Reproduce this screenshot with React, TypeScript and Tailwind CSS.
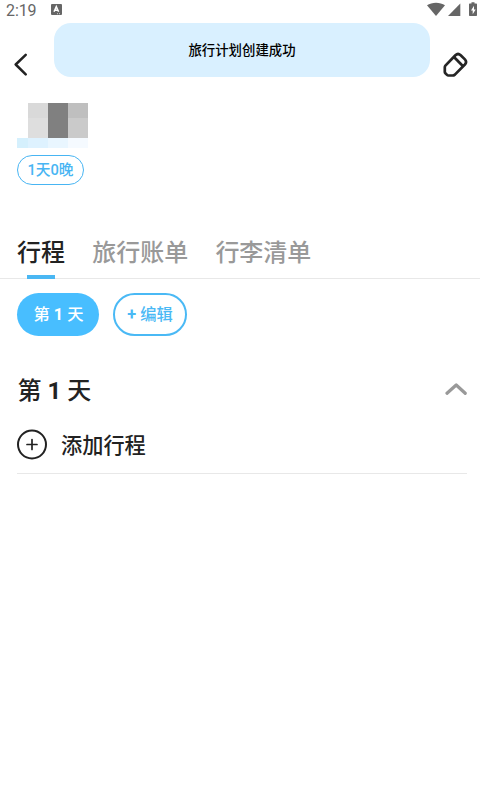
import React, { useState } from 'react';
import clsx from 'clsx';

const tabs = ['行程', '旅行账单', '行李清单'];

const StatusBar: React.FC = () => (
  <div className="flex h-5 items-center justify-between pl-1.5 pr-[3px] text-[#666]">
    <div className="flex items-center gap-[15px]">
      <span className="pt-px text-[16px] leading-5 tracking-[-0.1px]">2:19</span>
      <svg className="mb-px h-[11px] w-[11px]" viewBox="0 0 11 11">
        <rect width="11" height="11" rx="1" fill="#666" />
        <path d="M3 7.8 5.3 2.6 7.6 7.8M4 6.2h2.8" fill="none" stroke="#fff" strokeWidth="1.5" />
        <path d="M6 9.7h1M8 9.7h1" stroke="#fff" strokeWidth="0.7" />
      </svg>
    </div>
    <svg className="h-5 w-[50px]" viewBox="0 0 50 20" fill="#666">
      <path d="M0 5.2C4.8 1.8 13.2 1.8 18 5.2L9 16Z" />
      <path d="M33.3 3.6V16H21Z" />
      <path d="M44.5 2.2h3v1.3h1.8q.7 0 .7.7v11.1q0 .7-.7.7h-6.6q-.7 0-.7-.7V4.2q0-.7.7-.7h1.8Z" />
      <path d="M47 5.8 44 10.4h1.7v3.8l3-4.8H47Z" fill="#fff" />
    </svg>
  </div>
);

const Header: React.FC = () => (
  <header className="flex h-[57px] items-start pt-[3px]">
    <button className="mt-[29px] ml-[13px] h-6 w-4" aria-label="返回">
      <svg className="h-6 w-4" viewBox="0 0 16 24" fill="none" stroke="#222" strokeWidth="2.5" strokeLinecap="round" strokeLinejoin="round">
        <path d="M12.7 2.8 2.7 12.5 12.7 22.3" />
      </svg>
    </button>
    <div className="ml-[25px] flex h-[54px] w-[376px] items-center justify-center rounded-[17px] bg-[#d9f0ff] pt-0.5 text-[13.4px] font-medium text-black">
      旅行计划创建成功
    </div>
    <button className="mt-[28px] ml-[12px] h-7 w-7" aria-label="编辑">
      <svg className="h-7 w-7" viewBox="0 0 28 28" fill="none" stroke="#252525" strokeWidth="2.7" strokeLinejoin="round">
        <path d="M3.4 14.6 13.4 4.2Q16 1.8 18.7 4.2L22.9 8.4Q25.2 10.9 22.9 13.5L12.9 23.6Q11.8 24.5 10.4 24.5H6.4Q5.6 24.5 5 23.9L3.4 22.3Q2.8 21.7 2.8 20.9V16.2Q2.8 15.3 3.4 14.6Z" />
        <path d="M12.2 6.2 20.8 15" />
      </svg>
    </button>
  </header>
);

const CoverMosaic: React.FC = () => (
  <div className="mt-[26px] ml-[17px] grid w-[71px] grid-cols-[11px_20px_20px_20px] grid-rows-[15px_20px_10px]">
    <span />
    <span className="bg-[#d9d9d9]" />
    <span className="row-span-2 bg-[#808080]" />
    <span className="bg-[#bfbfbf]" />
    <span />
    <span className="bg-[#dedede]" />
    <span className="bg-[#cacaca]" />
    <span className="bg-[#d5f0fd]" />
    <span className="bg-[#def2ff]" />
    <span className="bg-[#e9f6ff]" />
    <span className="bg-[#f5faff]" />
  </div>
);

const App: React.FC = () => {
  const [active, setActive] = useState(0);
  const [open, setOpen] = useState(true);

  return (
    <div className="flex h-[812px] w-[480px] flex-col bg-white font-[Roboto,'Noto_Sans_CJK_SC',sans-serif] text-[#222]">
      <StatusBar />
      <Header />
      <CoverMosaic />
      <div className="mt-[7px] ml-[17px] flex h-[30px] w-[67px] items-center justify-center rounded-full border border-[#48b5f3] pt-px text-[14.7px] font-medium text-[#48b5f3]">
        1天0晚
      </div>

      <nav className="mt-[49px] flex h-[45px] gap-[27.2px] border-b border-[#e8e8e8] pl-[17px]">
        {tabs.map((tab, i) => (
          <button
            key={tab}
            onClick={() => setActive(i)}
            className={clsx(
              'flex h-[45px] flex-col items-center justify-between pt-px text-[24px] leading-[36px] font-medium',
              i === active ? 'text-[#222]' : 'text-[#999]',
            )}
          >
            {tab}
            {i === active && <span className="h-1 w-7 bg-[#4ab7f3]" />}
          </button>
        ))}
      </nav>

      <div className="mt-[14px] flex gap-[14px] pl-[17px] font-medium">
        <button className="h-[43px] w-[82px] rounded-full bg-[#48beff] pt-0.5 pl-px text-[16.3px] text-white">
          第 <span className="font-bold">1</span> 天
        </button>
        <button className="h-[43px] w-[74px] rounded-full border-2 border-[#4ab9f5] pt-0.5 text-[16.3px] text-[#4ab9f5]">
          <span className="font-bold">+</span> 编辑
        </button>
      </div>

      <section className="mx-[13px] mt-[36px] pl-1">
        <button onClick={() => setOpen(!open)} className="flex h-9 w-full items-center justify-between text-[24px] font-medium">
          <span className="pt-0.5 pl-[0.5px]">
            第 <span className="font-bold">1</span> 天
          </span>
          <svg className={clsx('mb-0.5 h-4 w-[22px]', !open && 'rotate-180')} viewBox="0 0 22 16" fill="none" stroke="#999" strokeWidth="3.2" strokeLinecap="round" strokeLinejoin="round">
            <path d="M2 12.3 11.2 4 20.2 12.3" />
          </svg>
        </button>
        {open && (
          <button className="flex h-[66px] w-full items-center gap-[14px] border-b border-[#e8e8e8] pt-2 text-[21.2px] font-medium">
            <svg className="h-[30px] w-[30px] overflow-visible" viewBox="0 0 30 30" fill="none" stroke="#222" strokeWidth="2" strokeLinecap="round">
              <circle cx="15" cy="14.5" r="14" />
              <path d="M15 9.5v10M10 14.5h10" strokeWidth="1.7" />
            </svg>
            <span className="pt-0.5">添加行程</span>
          </button>
        )}
      </section>
    </div>
  );
};

export default App;
